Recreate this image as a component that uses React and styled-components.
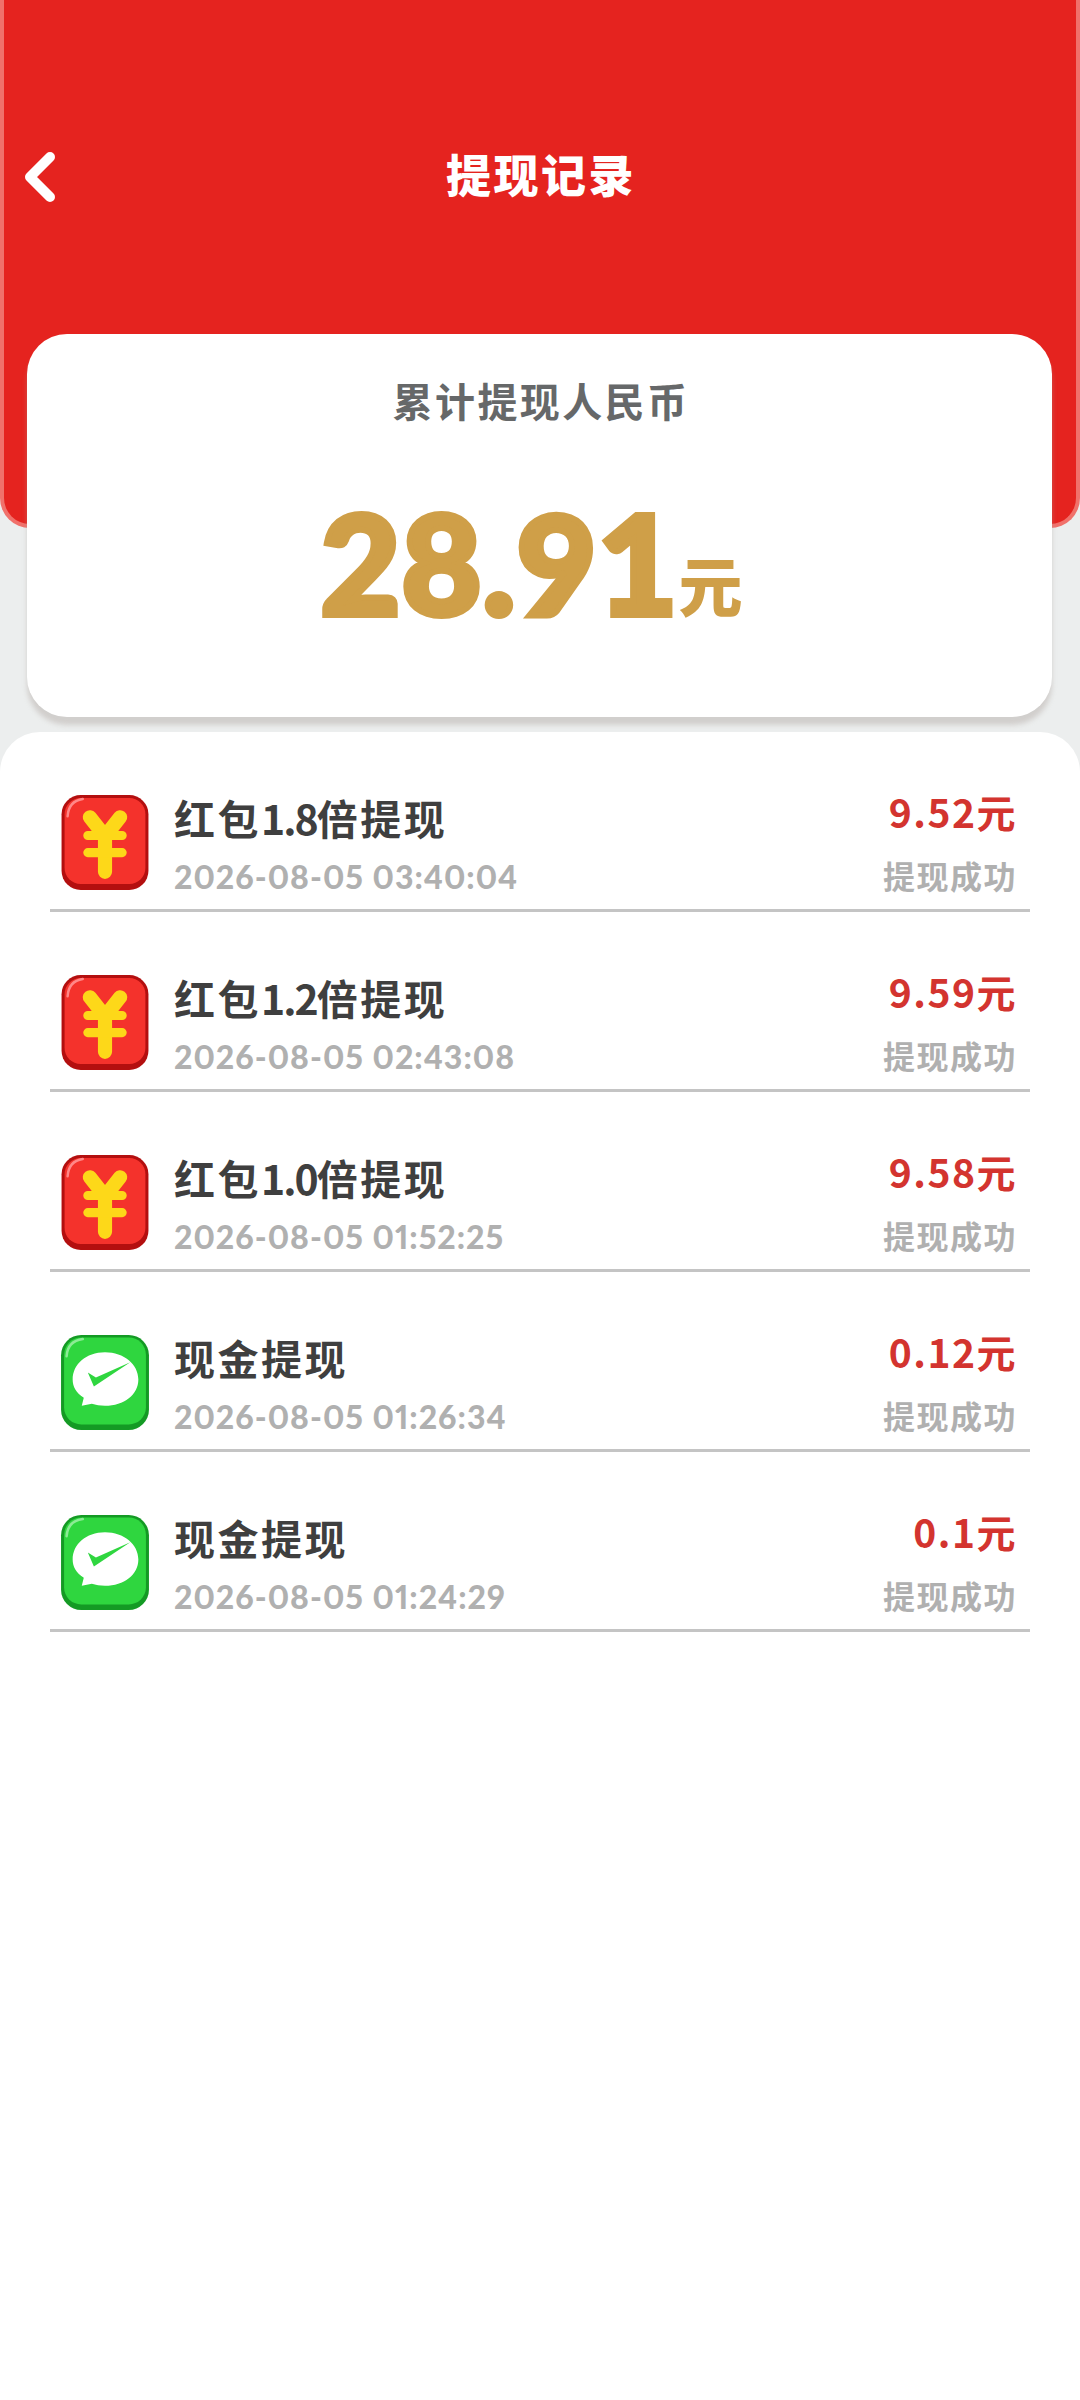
import React from 'react'
import styled, { createGlobalStyle } from 'styled-components'

const cjk = '"Noto Sans CJK SC", "Noto Sans", sans-serif'

const GlobalStyle = createGlobalStyle`
    html, body {
        margin: 0;
        padding: 0;
        background: #eceeee;
        font-family: ${cjk};
    }
`

const Page = styled.div`
    width: 1080px;
    height: 2400px;
    overflow: hidden;
    background: #eceeee;
`

const Hero = styled.header`
    box-sizing: border-box;
    height: 528px;
    background: #e5231f;
    border: 4px solid #f0716b;
    border-top: none;
    border-radius: 0 0 30px 30px;
    padding-top: 144px;
`

const NavBar = styled.div`
    display: flex;
    align-items: center;
    justify-content: center;
    position: relative;
    height: 60px;
`

const BackIcon = styled.svg`
    position: absolute;
    left: 16px;
    top: 7px;
    width: 36px;
    height: 52px;
`

const Title = styled.h1`
    margin: 0 0 0 2px;
    color: #fff;
    font-size: 45px;
    font-weight: 900;
    line-height: 60px;
    letter-spacing: 2.5px;
`

const TotalCard = styled.section`
    position: relative;
    box-sizing: border-box;
    width: 1025px;
    height: 383px;
    margin: -194px 0 0 27px;
    padding-top: 41px;
    background: #fff;
    border-radius: 40px;
    box-shadow: 0 8px 5px rgba(170, 160, 155, 0.4);
    text-align: center;
`

const TotalLabel = styled.div`
    padding-left: 3px;
    color: #666869;
    font-size: 40px;
    font-weight: 700;
    line-height: 50px;
    letter-spacing: 2.4px;
`

const TotalValue = styled.div`
    display: flex;
    align-items: baseline;
    justify-content: center;
    margin-top: 42px;
    padding-right: 16px;
    color: #cf9f48;
    line-height: 190px;
`

const TotalNumber = styled.span`
    font-family: Lato, sans-serif;
    font-size: 138px;
    font-weight: 900;
    letter-spacing: 1px;
    -webkit-text-stroke: 6px #cf9f48;
`

const TotalUnit = styled.span`
    position: relative;
    bottom: 4px;
    margin-left: 0;
    font-size: 64px;
    font-weight: 900;
`

const RecordList = styled.section`
    box-sizing: border-box;
    height: 1668px;
    margin-top: 15px;
    padding: 0 50px;
    background: #fff;
    border-radius: 40px 40px 0 0;
`

const Row = styled.div`
    box-sizing: border-box;
    display: flex;
    height: 180px;
    padding: 62px 13px 0 10px;
    border-bottom: 3px solid #c4c4c4;
`

const IconBox = styled.svg`
    flex: none;
    width: 90px;
    height: 97px;
`

const Info = styled.div`
    flex: 1;
    margin: -5px 0 0 24px;
`

const RowTitle = styled.div`
    color: #3f3f3f;
    font-size: 41px;
    font-weight: 700;
    line-height: 56px;
    letter-spacing: 2.5px;
`

const Multiplier = styled.span`
    letter-spacing: -2px;
`

const RowDate = styled.div`
    margin-top: 7px;
    color: #b0b0b0;
    font-family: Lato, sans-serif;
    font-size: 32px;
    font-weight: 900;
    font-variant-numeric: proportional-nums;
    line-height: 50px;
    letter-spacing: 1px;
`

const Side = styled.div`
    margin-top: -9px;
    text-align: right;
`

const Amount = styled.div`
    color: #d3342f;
    font-size: 39px;
    font-weight: 700;
    line-height: 52px;
    letter-spacing: 1.5px;
`

const Status = styled.div`
    margin-top: 13px;
    color: #b0b0b0;
    font-size: 32px;
    font-weight: 700;
    line-height: 50px;
    letter-spacing: 1.5px;
`

const RedPacketIcon = () => (
    <IconBox viewBox="0 0 88 96">
        <rect x="1" y="1" width="86" height="94" rx="19" fill="#b30f0f" />
        <rect x="4" y="4" width="80" height="85" rx="16" fill="#f4322c" />
        <path d="M7 22 Q8 7 22 5" fill="none" stroke="#f88" strokeWidth="2.5" strokeLinecap="round" />
        <path
            d="M29 23 L44 42 L59 23 M44 42 V77"
            fill="none"
            stroke="#fdd819"
            strokeWidth="14"
            strokeLinecap="round"
            strokeLinejoin="round"
        />
        <path
            d="M27 41 H61 M27 58 H61"
            fill="none"
            stroke="#fdd819"
            strokeWidth="9"
            strokeLinecap="round"
        />
    </IconBox>
)

const WechatIcon = () => (
    <IconBox viewBox="0 0 88 96">
        <rect x="0.5" y="1" width="87" height="94" rx="20" fill="#149a24" />
        <rect x="3.5" y="3.5" width="81" height="86" rx="17" fill="#2fd63f" />
        <path d="M6 22 Q7 7 22 5" fill="none" stroke="#8ceb95" strokeWidth="2.5" strokeLinecap="round" />
        <path
            d="M44 18 C63 18 77 30 77 45 C77 60 63 71 44 71 C39 71 35 70 31 69 L21 71 L23 63 C15 58 12 52 12 45 C12 30 25 18 44 18 Z"
            fill="#fff"
        />
        <path d="M27 38 L33 52 L69 28 L35 43 Z" fill="#2fd63f" />
    </IconBox>
)

const records = [
    { type: 'red', title: ['红包', '1.8', '倍提现'], date: '2026-08-05 03:40:04', amount: '9.52元' },
    { type: 'red', title: ['红包', '1.2', '倍提现'], date: '2026-08-05 02:43:08', amount: '9.59元' },
    { type: 'red', title: ['红包', '1.0', '倍提现'], date: '2026-08-05 01:52:25', amount: '9.58元' },
    { type: 'wechat', title: ['现金提现'], date: '2026-08-05 01:26:34', amount: '0.12元' },
    { type: 'wechat', title: ['现金提现'], date: '2026-08-05 01:24:29', amount: '0.1元' },
]

const App = () => {
    return (
        <Page>
            <GlobalStyle />
            <Hero>
                <NavBar>
                    <BackIcon viewBox="0 0 36 52">
                        <path
                            d="M30 6 L10 26 L30 46"
                            fill="none"
                            stroke="#fff"
                            strokeWidth="10"
                            strokeLinecap="round"
                            strokeLinejoin="round"
                        />
                    </BackIcon>
                    <Title>提现记录</Title>
                </NavBar>
            </Hero>
            <TotalCard>
                <TotalLabel>累计提现人民币</TotalLabel>
                <TotalValue>
                    <TotalNumber>28.91</TotalNumber>
                    <TotalUnit>元</TotalUnit>
                </TotalValue>
            </TotalCard>
            <RecordList>
                {records.map((item) => (
                    <Row key={item.date}>
                        {item.type === 'red' ? <RedPacketIcon /> : <WechatIcon />}
                        <Info>
                            <RowTitle>
                                {item.title[0]}
                                {item.title[1] && <Multiplier>{item.title[1]}</Multiplier>}
                                {item.title[2]}
                            </RowTitle>
                            <RowDate>{item.date}</RowDate>
                        </Info>
                        <Side>
                            <Amount>{item.amount}</Amount>
                            <Status>提现成功</Status>
                        </Side>
                    </Row>
                ))}
            </RecordList>
        </Page>
    )
}

export default App
